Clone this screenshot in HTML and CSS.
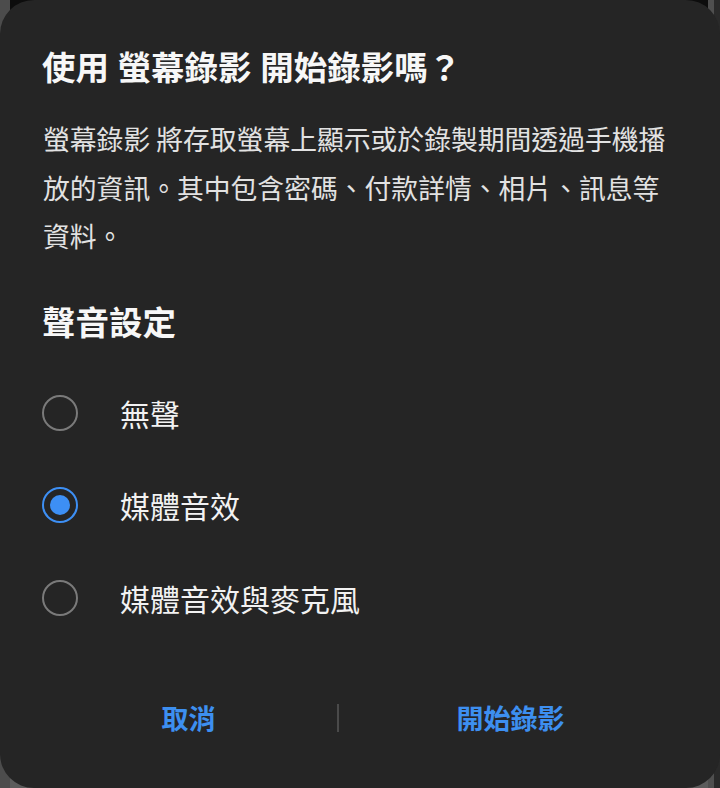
FILE: index.html
```html
<!DOCTYPE html>
<html lang="zh-Hant">
<head>
<meta charset="utf-8">
<title>螢幕錄影</title>
<link rel="stylesheet" href="styles.css">
</head>
<body>
<div class="dialog">
  <h1 class="title">使用 螢幕錄影 開始錄影嗎？</h1>
  <p class="desc">螢幕錄影 將存取螢幕上顯示或於錄製期間透過手機播放的資訊。其中包含密碼、付款詳情、相片、訊息等資料。</p>
  <h2 class="section">聲音設定</h2>
  <ul class="options">
    <li class="option"><span class="radio"></span><span class="label">無聲</span></li>
    <li class="option"><span class="radio radio-on"></span><span class="label">媒體音效</span></li>
    <li class="option"><span class="radio"></span><span class="label">媒體音效與麥克風</span></li>
  </ul>
  <div class="footer">
    <button class="btn">取消</button>
    <span class="divider"></span>
    <button class="btn btn-right">開始錄影</button>
  </div>
</div>
</body>
</html>
```

FILE: styles.css
```css
* { box-sizing: border-box; }
html, body { margin: 0; padding: 0; }
body {
  width: 720px;
  height: 788px;
  overflow: hidden;
  background:
    linear-gradient(to right, #4c4c4c 0, #4c4c4c 10px, transparent 10px, transparent 708px, #4f4f4f 708px, #4f4f4f 714px, #2a2a2a 714px),
    linear-gradient(to bottom, #0d0d0d 0%, #0d0d0d 12%, #5c5c5c 92%);
  font-family: "Noto Sans CJK TC", "Noto Sans", sans-serif;
}
.dialog {
  width: 720px;
  height: 788px;
  background: #252525;
  border-radius: 34px;
  padding: 46px 0 0 0;
  display: flex;
  flex-direction: column;
}
.title {
  margin: 0;
  padding: 0 42px;
  font-size: 33.5px;
  line-height: 40px;
  font-weight: 700;
  color: #f7f7f7;
  word-spacing: 1px;
}
.desc {
  margin: 29px 0 0 0;
  padding: 0 43px;
  font-size: 26.8px;
  line-height: 48.5px;
  color: #e2e2e2;
  font-weight: 400;
}
.section {
  margin: 40px 0 0 0;
  padding: 0 42px;
  font-size: 33.5px;
  line-height: 40px;
  font-weight: 700;
  color: #f7f7f7;
}
.options {
  list-style: none;
  margin: 26px 0 0 0;
  padding: 0;
}
.option {
  height: 92.5px;
  display: flex;
  align-items: center;
  padding-left: 42px;
  gap: 42px;
}
.radio {
  width: 36px;
  height: 36px;
  border-radius: 50%;
  border: 2px solid #7a7a7a;
  display: flex;
  align-items: center;
  justify-content: center;
  flex: none;
}
.radio-on {
  border: 2.5px solid #3d8ff4;
}
.radio-on::after {
  content: "";
  width: 20px;
  height: 20px;
  border-radius: 50%;
  background: #3d8ff4;
}
.label {
  font-size: 30px;
  line-height: 40px;
  color: #f2f2f2;
}
.footer {
  margin-top: 46px;
  height: 56px;
  display: grid;
  grid-template-columns: 297px 2px 1fr;
  align-items: center;
  padding: 0 38px 0 40px;
}
.btn {
  background: none;
  border: 0;
  padding: 0;
  font-family: inherit;
  font-size: 27px;
  line-height: 40px;
  font-weight: 700;
  color: #3d8ff0;
}
.divider {
  width: 2px;
  height: 28px;
  background: #4a4a4a;
}
```
